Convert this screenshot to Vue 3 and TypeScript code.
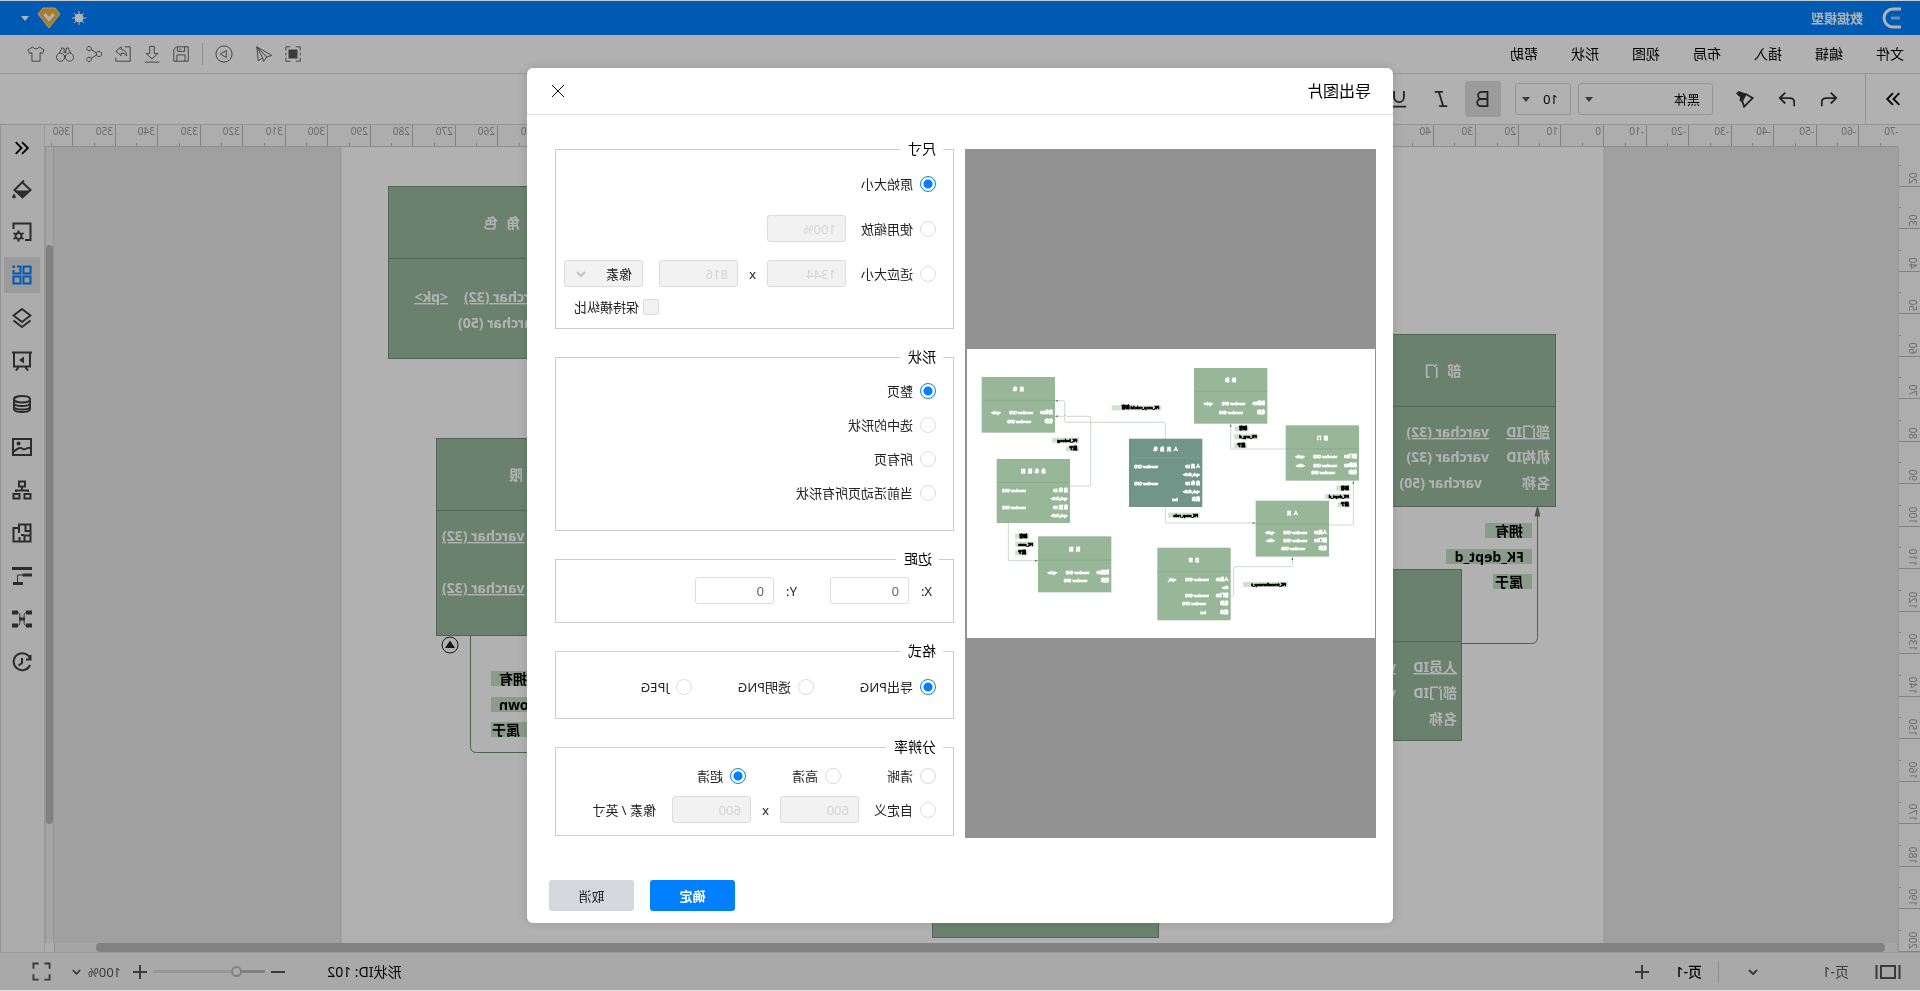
<script setup lang="ts">
import { ref } from 'vue'

interface Stroke {
  d: string
  fill?: boolean
  thin?: boolean
}

const icons: Record<string, Stroke[]> = {
  focus: [
    { d: 'M2 6V2h5M13 2h5v4M18 14v4h-5M7 18H2v-4M2 8.500v3M18 8.500v3' },
    { d: 'M5 5h10v10H5z', fill: true },
  ],
  pointer: [{ d: 'M18 2 1.500 11.500 7 13.500 10.500 18.500 11.500 14.500 16.500 17.500ZM18 2 7 13.500M18 2 11.500 14.500' }],
  play: [{ d: 'M10 1a9 9 0 1 0 0 18a9 9 0 1 0 0-18zM7.500 6v8l6.500-4z' }],
  save: [{ d: 'M2 2h13l3 3v13H2zM6 2v5h8V2M11 3.500v2M5.500 18v-7h9v7' }],
  download: [{ d: 'M7.500 1.500h5v8h4L10 15.500 3.500 9.500h4zM2 19h16' }],
  exportFile: [{ d: 'M8 2H2v16h16v-4M18 7l-6-5v3C8 5.500 6 8 6 12c2-2.500 3.500-3 6-3v3z' }],
  nodes: [
    { d: 'M4.500 7a3 3 0 1 0 .01 0zM15.500 1.500a2.500 2.500 0 1 0 .01 0zM15.500 13.500a2.500 2.500 0 1 0 .01 0zM7 9l6.500-4M7 11l6.500 4' },
  ],
  binoculars: [
    { d: 'M5 9a4.500 4.500 0 1 0 .01 0zM15 9a4.500 4.500 0 1 0 .01 0zM9 9V4L6.500 3 3.500 9.500M11 9V4l2.500-1 3 6.500M9 8h2M9 12h2' },
  ],
  shirt: [{ d: 'M6.500 2 1 5.500l2 4 2.500-1V18h9V8.500l2.500 1 2-4L13.500 2c-1 3-6 3-7 0z' }],
  undo: [{ d: 'M8 3 2 9l6 6M2.500 9H13c3.500 0 5 2 5 4.500V18' }],
  redo: [{ d: 'M12 3l6 6-6 6M17.500 9H7c-3.500 0-5 2-5 4.500V18' }],
  painter: [
    { d: 'M1.500 9 9 4.500l5 5L11 18.500z' },
    { d: 'M8 4.500 17 1l3 2.500-3 3.500-1.500.5.500 4.500-3 2z', fill: true },
  ],
  bold: [{ d: 'M5 2h6.500a4 4 0 0 1 0 8H5zM5 10h7.500a4 4 0 0 1 0 8H5z' }],
  italic: [{ d: 'M8 2h9M3 18h9M12.500 2 7.500 18' }],
  underline: [{ d: 'M4.500 1v7a5.500 5.500 0 0 0 11 0V1M2 18.500h16' }],
  bucket: [
    { d: 'M8 1.500l9.500 9.500-8 7.500L1.500 11 9 4' },
    { d: 'M2 11.500h15l-7.500 7z', fill: true },
    { d: 'M18 14.500c3 4 1.500 5 0 5s-3-1 0-5z', fill: true },
  ],
  frameGear: [
    { d: 'M7 18H1.500V1.500h17V7' },
    { d: 'M13.500 11a3 3 0 1 0 .01 0zM13.500 8.500V11M13.500 17v2.500M8.500 11l2.500 1.500M16 15.500l2.500 1.500M18.500 11 16 12.500M11 15.500 8.500 17' },
  ],
  grid: [{ d: 'M1.500 1.500h7v7h-7zM18.500 5v3.500h-7v-7H15M17 1.500h1.500V3M1.500 11.500h7v7h-7zM11.500 11.500h7v7h-7z' }],
  layers: [{ d: 'M10 1 1.500 7.500 10 14l8.500-6.500zM1.500 12.500 10 19l8.500-6.500' }],
  board: [
    { d: 'M-.5 1.500h21M2 1.500v14h16v-14M7 15.500l-3 4M13 15.500l3 4' },
    { d: 'M8 5.500v7l5-3.500z', fill: true },
  ],
  database: [
    { d: 'M10 2c5 0 8 1.500 8 3.200S15 8.400 10 8.400 2 7 2 5.200 5 2 10 2zM2 5v10c0 4 16 4 16 0V5M2 9c0 4 16 4 16 0M2 12.500c0 4 16 4 16 0' },
  ],
  image: [
    { d: 'M1 2h18v16H1zM1 12c3-4 5 2 8 0s5-1 10 3' },
    { d: 'M13.500 4.500a2 2 0 1 0 .01 0z', fill: true },
  ],
  tree: [{ d: 'M7 1.500h6v5H7zM10 6.500V11M4 12v-1.500h12V12M1.500 14h6v4.500h-6zM12.500 14h6v4.500h-6z' }],
  floor: [{ d: 'M1.500 1.500H13V5h5.500v13.500h-17zM1.500 8h5V2M1.500 12.500h6V18M13 5v5M11 12h-3M12.500 18v-4' }],
  gantt: [
    { d: 'M9 9h5.500v7', thin: true },
    { d: 'M0 1h20v3h-1.500H0zM0 7.500h9.500v3H0zM9 16h10v3H9z', fill: true },
  ],
  network: [
    { d: 'M5 3.500c5.500 0 .5 6.500 5 6.500s-.5-6.500 5-6.500M5 16.500c5.500 0 .5-6.500 5-6.500s-.5 6.500 5 6.500', thin: true },
    { d: 'M0 1.500h6v4H0zM14 1.500h6v4h-6zM0 14.500h6v4H0zM14 14.500h6v4h-6zM7 8.500h6v3H7z', fill: true },
  ],
  history: [{ d: 'M1.500 8A8.500 8.500 0 1 1 2 13M1.500 3v4.500H6M10 6v5l3.500 2.500' }],
  left: [{ d: 'M10 3.500 3.500 10l6.500 6.500M17 3.500 10.500 10l6.500 6.500' }],
  right: [{ d: 'M3 3.500 9.500 10 3 16.500M10 3.500l6.500 6.500-6.500 6.500' }],
}

const menus = ['文件', '编辑', '插入', '布局', '视图', '形状', '帮助']
const quickTools = ['save', 'download', 'exportFile', 'nodes', 'binoculars', 'shirt']
const panels = ['bucket', 'frameGear', 'grid', 'layers', 'board', 'database', 'image', 'tree', 'floor', 'gantt', 'network', 'history']

/* Ruler spacing: 42.52 pixels for ten units. */
const step = 42.52
const topTicks = Array.from({ length: 44 }, (_, i) => ({ n: (i - 7) * 10, x: Math.round(316 + (i - 7) * step) }))
const sideTicks = Array.from({ length: 20 }, (_, i) => ({ n: (i + 1) * 10, y: Math.round(143 + i * step) }))

interface Cell {
  x: number
  y: number
  t: string
  u?: boolean
  end?: boolean
}
interface Entity {
  x: number
  y: number
  w: number
  h: number
  split: number
  title: string
  cells: Cell[]
}

const entities: Entity[] = [
  {
    x: 364, y: 334, w: 226, h: 172, split: 72, title: '部 门',
    cells: [
      { x: 370, y: 437, t: '部门ID', u: true }, { x: 431, y: 437, t: 'varchar (32)', u: true },
      { x: 370, y: 462, t: '机构ID' }, { x: 431, y: 462, t: 'varchar (32)' },
      { x: 370, y: 488, t: '名称' }, { x: 438, y: 488, t: 'varchar (50)' },
    ],
  },
  {
    x: 458, y: 569, w: 226, h: 171, split: 72, title: '人 员',
    cells: [
      { x: 463, y: 672, t: '人员ID', u: true }, { x: 524, y: 672, t: 'varchar (32)', u: true },
      { x: 463, y: 698, t: '部门ID' }, { x: 524, y: 698, t: 'varchar (32)' },
      { x: 463, y: 724, t: '名称' },
    ],
  },
  {
    x: 1305, y: 186, w: 226, h: 172, split: 72, title: '角 色',
    cells: [
      { x: 1456, y: 302, t: 'varchar (32)', u: true, end: true }, { x: 1472, y: 302, t: '<pk>', u: true },
      { x: 1462, y: 328, t: 'varchar (50)', end: true },
    ],
  },
  {
    x: 1257, y: 438, w: 226, h: 197, split: 72, title: '角 色 权 限',
    cells: [
      { x: 1478, y: 541, t: 'varchar (32)', u: true, end: true },
      { x: 1478, y: 593, t: 'varchar (32)', u: true, end: true },
    ],
  },
  { x: 761, y: 760, w: 226, h: 177, split: 72, title: '', cells: [] },
]

interface Tag {
  x: number
  y: number
  w: number
  t: string
  tx: number
  end?: boolean
}
const tags: Tag[] = [
  { x: 388, y: 523, w: 47, t: '拥有', tx: 397 },
  { x: 388, y: 549, w: 86, t: 'FK_dept_d', tx: 396 },
  { x: 388, y: 574, w: 39, t: '属于', tx: 397 },
  { x: 1380, y: 671, w: 49, t: '拥有', tx: 1421, end: true },
  { x: 1360, y: 697, w: 69, t: 'FK_own', tx: 1421, end: true },
  { x: 1390, y: 722, w: 39, t: '属于', tx: 1428, end: true },
]

/* Thumbnail of the whole drawing, in thirds of a pixel. */
const short = (id: string, key: string, y: number): [number, number, string][] => [
  [7, y, id], [66, y, 'varchar (32)'], [163, y, key],
]
const thumbs = [
  { x: 323, y: 57, h: 167, split: 70, title: '机 构', rows: [...short('机构ID', '<pk>', 111), [7, 137, '名称'], [74, 137, 'varchar (50)']] },
  { x: 48, y: 229, h: 166, split: 70, title: '部 门', rows: [...short('部门ID', '<pk>', 97), ...short('机构ID', '<fk>', 124), [7, 147, '名称'], [72, 147, 'varchar (50)']] },
  { x: 138, y: 455, h: 168, split: 71, title: '人 员', rows: [...short('人员ID', '<pk>', 99), ...short('部门ID', '<fk>', 125), [7, 149, '名称'], [72, 149, 'varchar (50)']] },
  { x: 433, y: 596, h: 218, split: 71, title: '日 志', rows: [...short('人员ID', '<pk,', 99), [7, 123, 'fk>'], [7, 149, '部门ID'], [66, 149, 'varchar (32)'], [7, 173, '名称'], [74, 173, 'varchar (50)'], [7, 199, '状态'], [74, 199, 'int']] },
  { x: 518, y: 269, h: 205, split: 58, title: '人 员 角 色', dark: true, rows: [[7, 87, '人 员 ID'], [133, 87, 'varchar (32)'], [7, 113, '<pk,fk1>'], [7, 138, '角 色 ID'], [133, 138, 'varchar (32)'], [7, 164, '<pk,fk2>'], [7, 187, '状态'], [74, 187, 'int']] },
  { x: 960, y: 84, h: 167, split: 70, title: '角 色', rows: [...short('角色ID', '<pk>', 110), [7, 137, '名称'], [72, 137, 'varchar (50)']] },
  { x: 915, y: 330, h: 192, split: 70, title: '角 色 权 限', rows: [[7, 100, '角 色 ID'], [133, 100, 'varchar (32)'], [7, 124, '<pk,fk1>'], [7, 151, '权 限 ID'], [133, 151, 'varchar (32)'], [7, 175, '<pk,fk2>']] },
  { x: 791, y: 562, h: 168, split: 71, title: '权 限', rows: [...short('权限ID', '<pk>', 112), [7, 136, '名称'], [72, 136, 'varchar (50)']] },
] as { x: number; y: number; h: number; split: number; title: string; dark?: boolean; rows: [number, number, string][] }[]

const thumbTags = [
  { x: 379, y: 234, w: 42, t: '拥有' },
  { x: 350, y: 258, w: 72, t: 'FK_org_d' },
  { x: 384, y: 284, w: 38, t: '属于' },
  { x: 74, y: 412, w: 42, t: '拥有' },
  { x: 74, y: 437, w: 76, t: 'FK_dept_d' },
  { x: 74, y: 462, w: 38, t: '属于' },
  { x: 642, y: 171, w: 148, t: 'FK_emp_roleId 拥有' },
  { x: 888, y: 268, w: 80, t: 'FK_belong' },
  { x: 888, y: 294, w: 38, t: '属于' },
  { x: 1038, y: 556, w: 42, t: '拥有' },
  { x: 1021, y: 580, w: 58, t: 'FK_own' },
  { x: 1042, y: 606, w: 38, t: '属于' },
  { x: 526, y: 493, w: 94, t: 'FK_emp_role' },
  { x: 262, y: 701, w: 134, t: 'FK_transferemp_t' },
]

const size = ref('origin')
const shape = ref('page')
const format = ref('png')
const dpi = ref('ultra')
const zoom = ref(23)
const marginX = ref('0')
const marginY = ref('0')

const shapeOptions = [
  ['page', '整页'], ['selected', '选中的形状'], ['all', '所有页'], ['active', '当前活动页所有形状'],
]
const formatOptions = [['png', '导出PNG'], ['clear', '透明PNG'], ['jpeg', 'JPEG']]
const dpiOptions = [['sharp', '清晰'], ['high', '高清'], ['ultra', '超清']]
</script>

<template>
  <div class="app">
    <header class="topbar">
      <svg class="logo" viewBox="0 0 20 22"><path d="M1 2h8a9 9 0 0 1 0 18H1" /><path class="dim" d="M2 11h9" /></svg>
      <strong class="doc">数据模型</strong>
      <svg class="sun" viewBox="0 0 14 14"><circle cx="7" cy="7" r="4" /><path d="M7 0v14M0 7h14M2 2l10 10M12 2 2 12" /></svg>
      <svg class="gem" viewBox="0 0 24 22"><path d="M6 1h12l5 6-11 14L1 7z" /><path class="v" d="M7.500 7 12 12.500 16.500 7" /></svg>
      <i class="caret light"></i>
    </header>

    <nav class="menubar">
      <button v-for="m in menus" :key="m" class="menu">{{ m }}</button>
      <div class="quick">
        <button class="ic" aria-label="focus"><svg viewBox="0 0 20 20"><path v-for="(s, i) in icons.focus" :key="i" :d="s.d" :class="{ solid: s.fill }" /></svg></button>
        <button class="ic" aria-label="pointer"><svg viewBox="0 0 20 20"><path v-for="(s, i) in icons.pointer" :key="i" :d="s.d" /></svg></button>
        <button class="ic present" aria-label="play"><svg viewBox="0 0 20 20"><path v-for="(s, i) in icons.play" :key="i" :d="s.d" /></svg></button>
        <span class="rule"></span>
        <button v-for="n in quickTools" :key="n" class="ic" :aria-label="n"><svg viewBox="0 0 20 20"><path v-for="(s, i) in icons[n]" :key="i" :d="s.d" /></svg></button>
      </div>
    </nav>

    <div class="toolbar">
      <button class="fold" aria-label="fold"><svg viewBox="0 0 20 20"><path v-for="(s, i) in icons.right" :key="i" :d="s.d" /></svg></button>
      <button v-for="n in ['undo', 'redo', 'painter']" :key="n" class="tool" :aria-label="n"><svg viewBox="0 0 20 20"><path v-for="(s, i) in icons[n]" :key="i" :d="s.d" :class="{ solid: s.fill }" /></svg></button>
      <label class="pick font"><select aria-label="font"><option>黑体</option></select><i class="caret"></i></label>
      <label class="pick pt"><select aria-label="font size"><option>10</option></select><i class="caret"></i></label>
      <button v-for="n in ['bold', 'italic', 'underline']" :key="n" class="mark" :class="{ on: n === 'bold' }" :aria-label="n"><svg viewBox="0 0 20 20"><path v-for="(s, i) in icons[n]" :key="i" :d="s.d" /></svg></button>
    </div>

    <main class="work">
      <div class="stage">
        <div class="ruler-top">
          <svg class="full">
            <g transform="translate(-22 -125)">
              <g v-for="t in topTicks" :key="t.n">
                <path :d="`M${t.x + 0.5} 125v22M${t.x + 21.5} 143v4`" />
                <text :x="t.x + 3" y="135">{{ t.n }}</text>
              </g>
            </g>
          </svg>
        </div>
        <div class="ruler-side">
          <svg class="full">
            <g transform="translate(0 -147)">
              <g v-for="t in sideTicks" :key="t.n">
                <path :d="`M0 ${t.y + 0.5}h22M19 ${t.y - 20.5}h3`" />
                <text v-if="t.n > 10" :transform="`translate(11 ${t.y - 2}) rotate(-90)`">{{ t.n }}</text>
              </g>
            </g>
          </svg>
        </div>
        <svg class="scene">
          <defs>
            <marker id="tip" viewBox="0 0 12 6" markerWidth="12" markerHeight="6" refX="11" refY="3" orient="auto" markerUnits="userSpaceOnUse"><path d="M0 0 12 3 0 6z" fill="#5f7d63" /></marker>
          </defs>
          <g transform="translate(-22 -147)">
            <rect class="sheet" x="316" y="120" width="1263" height="1200" />
            <path class="wire" marker-end="url(#tip)" d="M458 643.500h-69.500q-6 0-6-6v-132" />
            <path class="wire" d="M1449.500 636v110.500q0 6-6 6h-80" />
            <g v-for="e in entities" :key="e.x">
              <rect class="entity" :x="e.x + 0.5" :y="e.y + 0.5" :width="e.w" :height="e.h" />
              <path class="entity" :d="`M${e.x} ${e.y + e.split + 0.5}h${e.w}`" />
              <text class="title" :x="e.x + e.w / 2" :y="e.y + 42">{{ e.title }}</text>
              <text v-for="(c, i) in e.cells" :key="i" :x="c.x" :y="c.y" :class="{ under: c.u, end: c.end }">{{ c.t }}</text>
            </g>
            <g v-for="t in tags" :key="t.y">
              <rect class="tag" :x="t.x" :y="t.y" :width="t.w" height="15" />
              <text class="tagtext" :class="{ end: t.end }" :x="t.tx" :y="t.y + 13">{{ t.t }}</text>
            </g>
            <circle class="badge" cx="1470" cy="645" r="8" />
            <path class="badge-up" d="M1470 640.500l5 7.500h-10z" />
          </g>
        </svg>
        <div class="vscroll"><span></span></div>
        <div class="hscroll"><span></span></div>
      </div>
      <aside class="side">
        <button class="sidebtn expand" aria-label="expand"><svg viewBox="0 0 20 20"><path v-for="(s, i) in icons.left" :key="i" :d="s.d" /></svg></button>
        <button v-for="n in panels" :key="n" class="sidebtn" :class="{ on: n === 'grid' }" :aria-label="n"><svg viewBox="0 0 20 20"><path v-for="(s, i) in icons[n]" :key="i" :d="s.d" :class="{ solid: s.fill, thin: s.thin }" /></svg></button>
      </aside>
    </main>

    <footer class="status">
      <svg class="pages" viewBox="0 0 26 16"><path d="M1.500 1v14M24.500 1v14M6 2h14v12H6z" /></svg>
      <button class="pagepick">页-1<svg class="chev" viewBox="0 0 10 6"><path d="M1 1l4 4 4-4" /></svg></button>
      <button class="tab">页-1</button>
      <button class="plus" aria-label="add page"><svg viewBox="0 0 14 14"><path d="M7 0v14M0 7h14" /></svg></button>
      <span class="shapeid">形状ID: 102</span>
      <button class="plus" aria-label="zoom out"><svg viewBox="0 0 14 14"><path d="M0 7h14" /></svg></button>
      <input v-model="zoom" class="slider" type="range" min="0" max="100" aria-label="zoom" />
      <button class="plus" aria-label="zoom in"><svg viewBox="0 0 14 14"><path d="M7 0v14M0 7h14" /></svg></button>
      <button class="percent">100%<svg class="chev" viewBox="0 0 10 6"><path d="M1 1l4 4 4-4" /></svg></button>
      <button class="fit" aria-label="fit"><svg viewBox="0 0 20 20"><path d="M1.500 7V1.500H7M13 1.500h5.500V7M18.500 13v5.500H13M7 18.500H1.500V13" /></svg></button>
    </footer>

    <div class="mask">
      <form class="dialog" role="dialog" aria-labelledby="dlg-title" @submit.prevent>
        <div class="head">
          <h1 id="dlg-title">导出图片</h1>
          <button type="button" class="close" aria-label="close"><svg viewBox="0 0 14 14"><path d="M1 1l12 12M13 1 1 13" /></svg></button>
        </div>
        <div class="body">
          <div class="preview">
            <svg class="thumb" viewBox="0 0 1224 867">
              <g class="lines">
                <path d="M268 300h160q5 0 5-5v-70M358 528h-68q-5 0-5-5M138 528h-68q-5 0-5-5v-127" />
                <path d="M629 269v-44q0-5 5-5h292q5 0 5-5v-55q0-5 5-5h24M915 411h-57q-5 0-5-5v-199q0-5 5-5h67q5-7 10 0h25M629 474v43q0 5-5 5h-266M1100 522v108q0 5-5 5h-84M433 741h-4q-5 0-5-5v-78q0-5-5-5h-166q-5 0-5-5v-25" />
              </g>
              <g v-for="(e, k) in thumbs" :key="k">
                <rect :class="e.dark ? 'ent dark' : 'ent'" :x="e.x" :y="e.y" width="220" :height="e.h" />
                <path class="split" :d="`M${e.x} ${e.y + e.split}h220`" />
                <text class="name" :x="e.x + 110" :y="e.y + (e.dark ? 36 : 43)">{{ e.title }}</text>
                <text v-for="(r, i) in e.rows" :key="i" :x="e.x + r[0]" :y="e.y + r[1]">{{ r[2] }}</text>
              </g>
              <g v-for="(t, k) in thumbTags" :key="k">
                <rect class="chip" :x="t.x" :y="t.y - 2" :width="t.w" height="15" />
                <text class="chiptext" :x="t.x + 5" :y="t.y + 10">{{ t.t }}</text>
              </g>
              <path class="heads" d="M433 224l-3 9h6zM65 395l-3 9h6zM960 155l-9-3v6zM960 202l-9-3v6zM358 522l9-3v6zM1011 635l9-3v6zM248 624l-3 9h6z" />
            </svg>
          </div>

          <div class="options">
            <fieldset class="f-size">
              <legend>尺寸</legend>
              <div class="row"><label><input v-model="size" type="radio" name="size" value="origin" />原始大小</label></div>
              <div class="row"><label><input v-model="size" type="radio" name="size" value="scale" />使用缩放</label><input class="box after" value="100%" disabled aria-label="缩放" /></div>
              <div class="row">
                <label><input v-model="size" type="radio" name="size" value="fit" />适应大小</label><input class="box after" value="1344" disabled aria-label="宽" />
                <span class="times">x</span><input class="box" value="816" disabled aria-label="高" />
                <span class="unit"><select disabled aria-label="单位"><option>像素</option></select><svg class="chev" viewBox="0 0 10 6"><path d="M1 1l4 4 4-4" /></svg></span>
              </div>
              <label class="keep"><input type="checkbox" disabled />保持横纵比</label>
            </fieldset>

            <fieldset class="f-shape">
              <legend>形状</legend>
              <label v-for="o in shapeOptions" :key="o[0]"><input v-model="shape" type="radio" name="shape" :value="o[0]" />{{ o[1] }}</label>
            </fieldset>

            <fieldset class="f-margin">
              <legend>边距</legend>
              <label>X:<input v-model="marginX" class="box" /></label>
              <label>Y:<input v-model="marginY" class="box" /></label>
            </fieldset>

            <fieldset class="f-format">
              <legend>格式</legend>
              <div class="line"><label v-for="o in formatOptions" :key="o[0]"><input v-model="format" type="radio" name="format" :value="o[0]" />{{ o[1] }}</label></div>
            </fieldset>

            <fieldset class="f-dpi">
              <legend>分辨率</legend>
              <div class="line"><label v-for="o in dpiOptions" :key="o[0]"><input v-model="dpi" type="radio" name="dpi" :value="o[0]" />{{ o[1] }}</label></div>
              <div class="row">
                <label><input v-model="dpi" type="radio" name="dpi" value="custom" />自定义</label><input class="box after" value="600" disabled aria-label="横向" />
                <span class="times">x</span><input class="box" value="600" disabled aria-label="纵向" /><span class="per">像素 / 英寸</span>
              </div>
            </fieldset>
          </div>
        </div>
        <div class="foot">
          <button type="submit" class="ok">确定</button>
          <button type="button" class="cancel">取消</button>
        </div>
      </form>
    </div>
  </div>
</template>

<style>
html,
body {
  margin: 0;
  overflow: hidden;
  background: #ddd;
}
</style>

<style scoped>
* {
  box-sizing: border-box;
}
.app {
  position: relative;
  display: flex;
  flex-direction: column;
  height: 100vh;
  border-top: 1px solid #c5cdd0;
  border-bottom: 1px solid #ddd;
  transform: scaleX(-1);
  font-family: "Noto Sans", "Noto Sans CJK SC", sans-serif;
  font-size: 13px;
  line-height: 20px;
  color: #000;
}
button,
input,
select {
  margin: 0;
  font: inherit;
  color: inherit;
}
button {
  display: flex;
  align-items: center;
  justify-content: center;
  padding: 0;
  border: 0;
  background: none;
}
svg {
  display: block;
  flex: none;
  fill: none;
  stroke: currentColor;
}
svg text {
  stroke: none;
}
.solid {
  fill: currentColor;
  stroke: none;
}
.thin {
  stroke-width: 1;
}
.caret {
  border: 4px solid transparent;
  border-top: 5px solid #555;
  border-bottom: 0;
}
.topbar {
  display: flex;
  align-items: center;
  height: 34px;
  padding: 0 21px 0 18px;
  background: #0080ff;
  color: #fff;
}
.logo {
  width: 20px;
  height: 22px;
  stroke-width: 3;
}
.dim {
  opacity: 0.6;
}
.doc {
  margin: 0 auto 0 19px;
}
.sun {
  width: 14px;
  height: 14px;
  margin-right: 11px;
}
.sun circle {
  fill: #fff;
}
.gem {
  width: 24px;
  height: 22px;
  margin-right: 8px;
  fill: #f0b13c;
  stroke: #ffe0a0;
}
.gem .v {
  fill: none;
  stroke: #fff;
  stroke-width: 3;
}
.caret.light {
  border-top-color: #fff;
}
.menubar {
  display: flex;
  align-items: center;
  gap: 33px;
  height: 39px;
  padding: 0 27px 0 16px;
  border-bottom: 1px solid #dcdcdc;
  background: #fefefe;
}
.menu {
  font-size: 14px;
}
.quick {
  display: flex;
  align-items: center;
  gap: 11px;
  margin-left: auto;
  color: #555;
}
.ic svg {
  width: 18px;
  height: 18px;
}
.present {
  margin-left: 11px;
}
.rule {
  width: 1px;
  height: 22px;
  margin: 0 1px;
  background: #ccc;
}
.toolbar {
  display: flex;
  align-items: center;
  height: 51px;
  border-bottom: 1px solid #d4d4d4;
  background: #fefefe;
  color: #333;
}
.toolbar svg {
  width: 18px;
  height: 18px;
  stroke-width: 2;
}
.fold {
  width: 55px;
  height: 50px;
  border-right: 1px solid #d4d4d4;
  color: #000;
}
.tool {
  width: 42px;
  height: 36px;
}
.tool:nth-child(2) {
  margin-left: 15px;
}
.tool:nth-child(4) {
  margin-right: 11px;
}
.pick {
  display: flex;
  align-items: center;
  height: 32px;
  margin-right: 7px;
  padding: 0 6px 0 12px;
  border: 1px solid #d4d4d4;
  border-radius: 3px;
}
.pick select {
  flex: 1;
  min-width: 0;
  padding: 0;
  border: 0;
  appearance: none;
  background: none;
  color: #000;
}
.font {
  width: 135px;
}
.pt {
  width: 56px;
  margin-right: 14px;
}
.mark {
  width: 36px;
  height: 36px;
  margin-right: 6px;
  border-radius: 3px;
}
.mark.on {
  background: #dedede;
}
.work {
  display: flex;
  flex: 1;
  min-height: 0;
}
.stage {
  display: grid;
  flex: 1;
  grid-template: 22px 1fr 9px / 22px 1fr 9px;
  min-width: 0;
  background: #f8f8f8;
}
.full {
  width: 100%;
  height: 100%;
  stroke: #bbb;
}
.full text {
  font-size: 10px;
  fill: #999;
}
.ruler-top {
  grid-area: 1 / 2 / 2 / 4;
  overflow: hidden;
  border-bottom: 1px solid #ccc;
}
.ruler-side {
  grid-area: 2 / 1 / 4 / 2;
  min-height: 0;
  border-right: 1px solid #ddd;
}
.scene {
  grid-area: 2 / 2;
  width: 100%;
  height: 100%;
  overflow: hidden;
  background: #e5e5e5;
  stroke: none;
  font-size: 14px;
  font-weight: 700;
}
.scene text {
  fill: #fff;
}
.sheet {
  fill: #fefefe;
  stroke: #d8d8d8;
}
.entity {
  fill: #98bb9d;
  stroke: #73917a;
}
.wire {
  stroke: #6b8f70;
}
.scene .title {
  text-anchor: middle;
  word-spacing: 5px;
}
.under {
  text-decoration: underline;
}
.end {
  text-anchor: end;
}
.tag {
  fill: #c5dec4;
}
.scene .tagtext {
  fill: #000;
}
.badge {
  stroke: #222;
}
.badge-up {
  fill: #222;
}
.vscroll {
  grid-area: 2 / 3;
  padding-top: 98px;
  border: 1px solid #d4d4d4;
  border-width: 0 1px;
  background: #eee;
}
.vscroll span {
  display: block;
  height: 83%;
  border-radius: 4px;
  background: #b9b9b9;
}
.hscroll {
  grid-area: 3 / 2;
  padding: 0 41px 0 12px;
  border: 1px solid #d4d4d4;
  border-width: 0 1px;
  background: #eee;
}
.hscroll span {
  display: block;
  height: 9px;
  border-radius: 4px;
  background: #b9b9b9;
}
.side {
  display: flex;
  flex-direction: column;
  align-items: center;
  gap: 7px;
  width: 45px;
  padding-top: 7px;
  border-left: 1px solid #ddd;
  border-right: 1px solid #d4d4d4;
  background: #f6f6f6;
  color: #3f3f3f;
}
.sidebtn {
  width: 36px;
  height: 36px;
}
.sidebtn svg {
  width: 20px;
  height: 20px;
  stroke-width: 2;
}
.sidebtn svg .thin {
  stroke-width: 1;
}
.sidebtn.expand {
  height: 32px;
  color: #000;
}
.sidebtn.expand svg {
  width: 18px;
  height: 18px;
}
.sidebtn.on {
  background: #dedede;
  color: #0080ff;
}
.status {
  display: flex;
  align-items: center;
  height: 38px;
  padding: 0 32px 0 19px;
  border-top: 1px solid #ddd;
  background: #f3f3f3;
  color: #555;
  font-size: 14px;
}
.status svg {
  stroke-width: 2;
}
.pages {
  width: 26px;
  height: 16px;
}
.chev {
  width: 10px;
  height: 6px;
}
.pagepick {
  justify-content: space-between;
  width: 131px;
  height: 22px;
  margin-left: 26px;
  margin-right: 16px;
  padding-right: 29px;
  border-right: 1px solid #ccc;
}
.tab {
  margin-right: 26px;
  color: #000;
  font-weight: 500;
}
.plus svg {
  width: 14px;
  height: 14px;
}
.shapeid {
  margin-left: auto;
  margin-right: 42px;
  color: #000;
}
.slider {
  width: 112px;
  height: 12px;
  margin: 0 6px;
  appearance: none;
  background: linear-gradient(#bbb, #bbb) 0 50% / 24% 3px no-repeat, linear-gradient(#d8d8d8, #d8d8d8) 0 50% / 100% 3px no-repeat;
}
.slider::-webkit-slider-thumb {
  width: 11px;
  height: 11px;
  appearance: none;
  border: 2px solid #bbb;
  border-radius: 50%;
  background: #f3f3f3;
}
.percent {
  gap: 7px;
  margin: 0 19px 0 12px;
  font-size: 13px;
}
.percent .chev {
  width: 9px;
}
.fit {
  margin-left: 2px;
}
.fit svg {
  width: 19px;
  height: 19px;
}
.mask {
  position: absolute;
  inset: 0;
  display: grid;
  place-items: center;
  background: rgba(0, 0, 0, 0.3);
}
.dialog {
  width: 866px;
  border-radius: 6px;
  background: #fff;
  box-shadow: 0 0 12px rgba(0, 0, 0, 0.15);
}
.head {
  display: flex;
  align-items: center;
  justify-content: space-between;
  height: 47px;
  padding: 0 24px 0 22px;
  border-bottom: 1px solid #e1e1e1;
}
.head h1 {
  margin: 0;
  font-size: 16px;
  font-weight: 400;
}
.close svg {
  width: 14px;
  height: 14px;
}
.body {
  display: flex;
  gap: 11px;
  padding: 24px 28px 42px 17px;
}
.preview {
  display: flex;
  flex: 1;
  align-items: center;
  margin-top: 10px;
  padding: 0 2px 0 1px;
  background: #929292;
}
.thumb {
  width: 100%;
  background: #fff;
  font-size: 12px;
  font-weight: 700;
}
.thumb text {
  fill: #fff;
  stroke: #fff;
  stroke-width: 2;
}
.lines {
  stroke: #b4c4b6;
  stroke-width: 2;
}
.ent {
  fill: #98b799;
  stroke: none;
}
.ent.dark {
  fill: #719589;
}
.split {
  stroke: #86a388;
  stroke-width: 2;
}
.thumb .name {
  text-anchor: middle;
  word-spacing: 5px;
}
.chip {
  fill: #cbe3c9;
  stroke: none;
}
.thumb .chiptext {
  fill: #000;
  stroke: #000;
}
.heads {
  fill: #5f7d63;
  stroke: none;
}
.options {
  display: flex;
  flex-direction: column;
  gap: 18px;
  width: 399px;
  padding-bottom: 2px;
}
fieldset {
  min-width: 0;
  margin: 0;
  padding: 0 8px 0 17px;
  border: 1px solid #ccc;
}
legend {
  margin-left: -7px;
  padding: 0 8px 0 7px;
  font-size: 14px;
}
label {
  display: flex;
  align-items: center;
  height: 20px;
  color: #222;
}
.row {
  display: flex;
  align-items: center;
  height: 27px;
  color: #222;
}
.row + .row {
  margin-top: 18px;
}
input[type="radio"],
input[type="checkbox"] {
  width: 16px;
  height: 16px;
  margin: 0 7px 0 0;
  appearance: none;
  border: 1px solid #dcdcdc;
  border-radius: 50%;
  background: #fff;
}
input[type="radio"]:checked {
  border-color: #0080ff;
  background: radial-gradient(#0080ff 4px, #fff 5px);
}
input[type="checkbox"] {
  margin-right: 4px;
  border-radius: 2px;
  background: #f2f2f2;
}
.box {
  width: 79px;
  height: 27px;
  padding: 0 9px;
  border: 1px solid #dcdcdc;
  border-radius: 3px;
  background: #fff;
  color: #666;
}
.box:disabled {
  background: #f2f2f2;
  color: #d4d4d4;
}
.after {
  margin-left: 15px;
}
.times {
  width: 29px;
  text-align: center;
}
.unit {
  position: relative;
  margin-left: auto;
}
.unit select {
  display: block;
  width: 79px;
  height: 27px;
  padding: 0 10px;
  appearance: none;
  border: 1px solid #dcdcdc;
  border-radius: 3px;
  background: #f2f2f2;
  color: #222;
  opacity: 1;
}
.unit .chev {
  position: absolute;
  top: 11px;
  right: 12px;
  stroke: #c4c4c4;
  stroke-width: 2;
}
.keep {
  justify-content: flex-end;
  height: 16px;
  margin-top: 12px;
  margin-right: 10px;
}
.f-size {
  padding-top: 11px;
  padding-bottom: 13px;
}
.f-shape {
  display: flex;
  flex-direction: column;
  gap: 14px;
  padding-top: 14px;
  padding-bottom: 27px;
}
.f-margin {
  display: flex;
  gap: 33px;
  padding: 8px 8px 18px 21px;
}
.f-margin label {
  height: 27px;
}
.f-margin .box {
  margin-left: 12px;
}
.line {
  display: flex;
}
.f-format {
  padding-top: 16px;
  padding-bottom: 21px;
}
.f-format .line label {
  width: 122px;
}
.f-dpi {
  padding-top: 9px;
  padding-bottom: 12px;
}
.f-dpi .line {
  margin-bottom: 10px;
}
.f-dpi .line label {
  width: 95px;
}
.per {
  margin-left: 16px;
}
.foot {
  display: flex;
  justify-content: flex-end;
  gap: 16px;
  padding: 0 22px 12px;
}
.foot button {
  width: 85px;
  height: 31px;
  border-radius: 3px;
}
.foot .ok {
  background: #0080ff;
  color: #fff;
  font-weight: 700;
}
.foot .cancel {
  background: #d5d7dc;
  color: #222;
}
</style>
